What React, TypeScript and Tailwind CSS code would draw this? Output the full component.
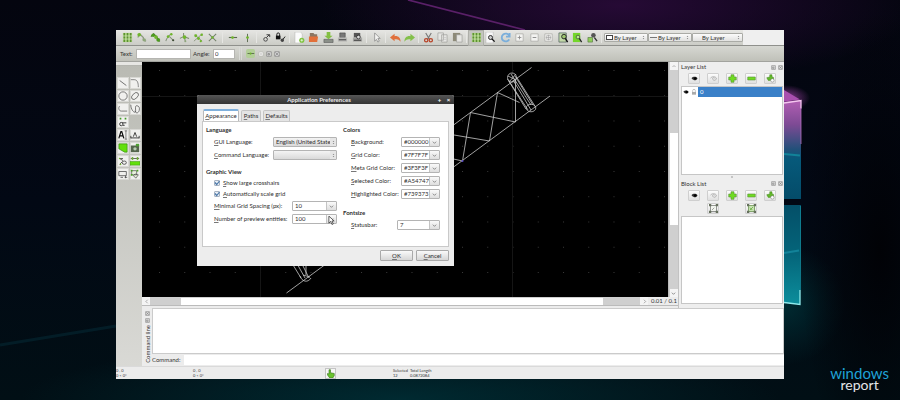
import type { ReactNode } from 'react'

const green = '#6fb52c'
const dark = '#3c4a33'

const icons: Record<string, ReactNode> = {
  grid: (
    <>
      <rect x="1" y="1" width="10" height="10" fill="#a5cf78" />
      <path d="M2.500 1v10M6 1v10M9.500 1v10" stroke="#5d8f34" strokeWidth="1.500" />
      <path d="M1 4.300h10M1 7.700h10" stroke="#dcebcb" strokeWidth=".7" />
    </>
  ),
  snapEnd: (
    <>
      <path d="M2 6 4 2l4 4v3l3 1" stroke="#8a977c" strokeWidth="1.300" fill="none" />
      <circle cx="3.500" cy="3" r="2" fill={green} />
      <circle cx="9" cy="8.500" r="1.800" fill="#8ea77a" />
    </>
  ),
  snapOn: (
    <>
      <path d="M1 5 4 2l4 4v3l3 1" stroke="#4b6b35" strokeWidth="1.200" fill="none" />
      <circle cx="3.500" cy="3.500" r="2" fill="#4c9a1e" />
      <circle cx="6.500" cy="5.500" r="2" fill={green} />
      <circle cx="9" cy="8.500" r="2" fill="#4c9a1e" />
    </>
  ),
  snapCenter: (
    <>
      <path d="M2 10C3 6 5 4 8 2M6 5l4 4" stroke="#84907a" strokeWidth="1.100" fill="none" />
      <circle cx="4.500" cy="5" r="1.500" fill={green} />
      <circle cx="8" cy="2.500" r="1.300" fill={green} />
      <circle cx="10" cy="9" r="1.200" fill={dark} />
    </>
  ),
  snapMid: (
    <>
      <path d="M5 1v4l6 2M5 5 1 7M6 6l1 5" stroke="#7d8a70" strokeWidth="1.100" fill="none" />
      <circle cx="6" cy="5.500" r="2" fill={green} />
      <circle cx="7" cy="10" r="1" fill="#8ea77a" />
    </>
  ),
  snapDist: (
    <>
      <path d="M1 10 10 2M2 3l8 7" stroke="#8b957f" strokeWidth="1" />
      <circle cx="3" cy="4" r="1.600" fill={green} />
      <circle cx="6" cy="7" r="1.600" fill={green} />
      <circle cx="9.500" cy="3" r="1.400" fill={green} />
      <circle cx="8.500" cy="10" r="1.200" fill={green} />
    </>
  ),
  cross: (
    <>
      <path d="m2 2 8 8M10 2 2 10" stroke="#74806a" strokeWidth="1.100" />
      <circle cx="6" cy="6" r="1.300" fill={green} />
    </>
  ),
  horiz: (
    <>
      <path d="M2 6h9" stroke="#59674e" strokeWidth="1.200" />
      <circle cx="6" cy="6" r="1.500" fill={green} />
    </>
  ),
  vert: (
    <>
      <path d="M6 2v9" stroke="#59674e" strokeWidth="1" />
      <circle cx="6" cy="6" r="1.500" fill={green} />
    </>
  ),
  relZero: (
    <>
      <circle cx="5" cy="8" r="2" fill="none" stroke="#444" strokeWidth="1" />
      <path d="M6 6 9 3M6 3h3.500v2.500" stroke="#333" strokeWidth="1" fill="none" />
    </>
  ),
  lockZero: (
    <>
      <rect x="1" y="4" width="5" height="4" fill="#111" />
      <path d="M2 4.500V2.500a1.500 1.500 0 0 1 3 0v2M8 9l3-4" stroke="#111" fill="none" />
      <circle cx="8" cy="9" r="1.800" fill="#444" />
    </>
  ),
  newFile: (
    <>
      <path d="M1 0h6l2 2v10H1z" fill="#fbfbfb" stroke="#b5b5b0" strokeWidth=".6" />
      <circle cx="8.500" cy="9" r="2.800" fill="#7cc23c" />
      <path d="M7 9h3M8.500 7.500v3" stroke="#fff" strokeWidth=".7" />
    </>
  ),
  open: (
    <>
      <path d="M2 1h4l1 1.500h3V6H2z" fill="#8b7764" />
      <path d="M1 5h10l-1 6H1z" fill="#e2703a" />
    </>
  ),
  save: (
    <>
      <path d="M1 8h10v3.500H1z" fill="#8a8f88" stroke="#555" strokeWidth=".6" />
      <path d="M4 0h4v4h2.500L6 8 1.500 4H4z" fill="#83bf43" />
    </>
  ),
  print: (
    <>
      <path d="M3 1h6v5H3z" fill="#777" stroke="#333" strokeWidth=".5" />
      <path d="M1 6h10v4.500H1z" fill="#b8b8b6" />
      <path d="M2 8.500h8" stroke="#333" />
    </>
  ),
  preview: (
    <>
      <path d="M2 1h7v5H2z" fill="#555" />
      <path d="M1 6h10v4.500H1z" fill="#a8a8a6" />
      <path d="M2 9h8" stroke="#333" />
      <circle cx="7" cy="5.500" r="2" fill="#ddd" stroke="#222" strokeWidth=".8" />
    </>
  ),
  pointer: <path d="M4 1v9l2-2 1.500 3L9 10 7.500 7H10z" fill="#f4f4f2" stroke="#777" strokeWidth=".7" />,
  undo: <path d="M0 6 5 2v2.500c4-.5 6.500 2 6.500 6C9.500 8 8 7.500 5 8v2z" fill="#e0703c" />,
  redo: <path d="M12 6 7 2v2.500c-4-.5-6.500 2-6.500 6C2.500 8 4 7.500 7 8v2z" fill="#83c04a" />,
  cut: (
    <>
      <path d="m3 1 4 7M9 1 5 8" stroke="#777" strokeWidth="1.200" />
      <circle cx="3.500" cy="9" r="1.800" fill="none" stroke="#b8452a" strokeWidth="1.400" />
      <circle cx="8.500" cy="9" r="1.800" fill="none" stroke="#b8452a" strokeWidth="1.400" />
    </>
  ),
  copy: (
    <>
      <path d="M1 1h6v8H1zM5 3h6v8H5z" fill="#e6e6e3" stroke="#9a9a96" strokeWidth=".7" />
      <path d="M6 6h4M6 8h4" stroke="#bbb" strokeWidth=".6" />
    </>
  ),
  paste: (
    <>
      <path d="M1 1h8v9H1z" fill="#8d8a78" />
      <path d="M5 3h6v8H5z" fill="#e6e6e3" stroke="#9a9a96" strokeWidth=".7" />
    </>
  ),
  zoomPage: (
    <>
      <path d="M1 0h8v12H1z" fill="#f8f8f8" stroke="#aaa" strokeWidth=".5" />
      <circle cx="6" cy="6" r="2.200" fill="#ccc" stroke="#222" />
      <path d="m7.500 7.500 3 3" stroke="#111" strokeWidth="1.500" />
    </>
  ),
  refresh: <path d="M10 4A4.300 4.300 0 1 0 10 8M10.500 1v4h-4" fill="none" stroke="#7aaedb" strokeWidth="2" />,
  zoomIn: (
    <>
      <path d="M2 2h8v8H2z" fill="#f3f3f1" stroke="#a9a9a5" strokeWidth=".8" />
      <path d="M6 4v4M4 6h4" stroke="#888" strokeWidth=".9" />
    </>
  ),
  zoomOut: (
    <>
      <path d="M2 2h8v8H2z" fill="#f3f3f1" stroke="#a9a9a5" strokeWidth=".8" />
      <path d="M4 6h4" stroke="#888" />
    </>
  ),
  zoomAll: (
    <>
      <path d="M2 2h8v8H2z" fill="#f3f3f1" stroke="#a9a9a5" strokeWidth=".8" />
      <path d="M6 3v6M3 6h6M4 4h4v4H4z" stroke="#999" strokeWidth=".6" fill="none" />
    </>
  ),
  zoomPrev: (
    <>
      <path d="M1 1h8v10H1z" fill="#c2d8a8" stroke="#455" strokeWidth=".7" />
      <circle cx="6.500" cy="5" r="2.500" fill="#9cc56e" stroke="#222" />
      <path d="m8 7 2.500 4" stroke="#111" strokeWidth="1.500" />
    </>
  ),
  zoomWin: (
    <>
      <path d="M1 1h8v10H1z" fill="#74d62a" />
      <circle cx="6.500" cy="5.500" r="2" fill="#b8ec8c" stroke="#444" strokeWidth=".8" />
      <path d="m8 7 2.500 4" stroke="#222" strokeWidth="1.400" />
    </>
  ),
  zoomPan: (
    <>
      <path d="M1 6h5v5H1z" fill="#8fce5a" stroke="#4a6b35" strokeWidth=".6" />
      <circle cx="7" cy="3.500" r="2.500" fill="#555" />
      <path d="m8 6 3 4" stroke="#333" strokeWidth="1.400" />
    </>
  ),
  line: <path d="m2 3 8 6" stroke="#333" strokeWidth=".8" />,
  arc: <path d="M1 2h4c4 0 5 4 5 9" stroke="#555" strokeWidth=".8" fill="none" />,
  circle: <circle cx="6" cy="6" r="5" stroke="#444" strokeWidth=".8" fill="none" />,
  ellipse: <ellipse cx="6" cy="6" rx="5" ry="3" transform="rotate(-45 6 6)" stroke="#444" strokeWidth=".8" fill="none" />,
  polyline: <path d="M2 2.500c-2 2-1 6 2 6h7" stroke="#444" strokeWidth=".8" fill="none" />,
  spline: <path d="M1 1c0 5 3 9 5 9s-1-8 2-8 4 3 3 6-4 4-5 0" stroke="#444" strokeWidth=".8" fill="none" />,
  points: (
    <>
      <path d="M2 1h2v2H2zM8 1h2v2H8z" fill="#3f9a26" />
      <circle cx="4" cy="8.500" r="2" fill="none" stroke="#222" />
      <path d="M5 7h5M6 10h2" stroke="#222" />
    </>
  ),
  text: (
    <>
      <path d="m1 10 2.500-8h1L7 10M2 7h4" stroke="#111" strokeWidth="1.500" fill="none" />
      <path d="M8 1h3M8 11h3M9.500 1v10" stroke="#333" strokeWidth=".7" />
    </>
  ),
  dim: <path d="M1 9.500h10M1 7v3M11 7v3M4 8l2-5 2 5" stroke="#222" strokeWidth="1" fill="none" />,
  hatch: (
    <>
      <path d="M1 1h10v10H8L1 7z" fill="#62df0b" />
      <path d="M1 1h10v10H8L1 7z" fill="none" stroke="#2c7a0c" strokeWidth=".7" />
    </>
  ),
  image: (
    <>
      <path d="M1 3h10v8H1z" fill="#55664d" />
      <path d="M7 1h4v3H7z" fill="#4fa034" />
      <circle cx="6" cy="7" r="2" fill="#b6cdb0" />
    </>
  ),
  modify: (
    <>
      <path d="m2 3 4 2.500M2 3h4M5 8a2.500 2 0 1 0 5 0 2.500 2 0 1 0-5 0M2 10l3-3" stroke="#333" strokeWidth=".9" fill="none" />
      <circle cx="2" cy="3" r="1" fill={green} />
      <circle cx="3" cy="10" r="1" fill={green} />
    </>
  ),
  measure: (
    <>
      <path d="M1 3h10M3 1.500v3M9 1.500v3" stroke="#222" strokeWidth=".8" />
      <path d="M0 6.500h12v4.500H0z" fill="#62df0b" stroke="#3b8a19" strokeWidth=".6" />
      <path d="M2 1.500h2v3H2zM8 1.500h2v3H8z" fill={green} />
    </>
  ),
  block: <path d="M1 3h9v5H1zM3 10h3M8 10h3M9 8v3" stroke="#444" strokeWidth=".9" fill="none" />,
  select: (
    <>
      <path d="M2 2h6v5H2zM6 6l4 1-3 4-3-3z" stroke="#444" strokeWidth=".8" fill="#e8f3dd" />
      <path d="M1 1h2v2H1zM8 1h2v2H8zM1 6h2v2H1z" fill="#49a321" />
    </>
  ),
  eye: (
    <>
      <path d="M2 5.500C4 3 9 3 10 6 8 9.500 5 9 2 5.500z" fill="#333" />
      <circle cx="7" cy="6" r="1.800" fill="#000" />
    </>
  ),
  eyeOff: <path d="M2 5.500C4 3 9 3 10 6M10 6c-1 3-4 3-5 1s2-3 3-1" stroke="#aaa" fill="none" strokeWidth="1.200" />,
  plus: <path d="M4 1h4v3h3v4H8v3H4V8H1V4h3z" fill="#6fdb22" stroke="#5a8f3a" strokeWidth=".8" />,
  minus: <path d="M1 4h10v4H1z" fill="#6fdb22" stroke="#5a8f3a" strokeWidth=".8" />,
  edit: (
    <>
      <path d="M5 1h3v2.500l2 1v4H3L1 5l4-1z" fill="#63b92b" stroke="#3b7a18" strokeWidth=".6" />
      <circle cx="8.500" cy="8.500" r="2.300" fill="#fff" stroke="#777" strokeWidth=".7" />
    </>
  ),
  blockEdit: (
    <>
      <path d="M2 2h8v8H2z" stroke="#555" strokeWidth=".8" fill="#f3f6ef" />
      <path d="M0 0h3v3H0zM9 0h3v3H9zM0 9h3v3H0zM9 9h3v3H9z" fill="#66705d" />
      <path d="m4 8 3-3" stroke="#888" />
    </>
  ),
  blockInsert: (
    <>
      <path d="M2 2h8v8H2z" stroke="#4a7a2c" strokeWidth=".8" fill="#c9e3b4" />
      <path d="M0 0h3v3H0zM9 0h3v3H9zM0 9h3v3H0zM9 9h3v3H9z" fill="#66705d" />
      <path d="m4 8 4-4M4 5l3 3" stroke="#6fb14a" strokeWidth="1.200" />
    </>
  ),
  lock: (
    <>
      <path d="M3 6h6v4H3z" fill="#aaa" />
      <path d="M4 6V4a2 2 0 0 1 4 0v2" fill="none" stroke="#aaa" />
    </>
  ),
  hand: <path d="M4 1h2v4l5 1v3l-2 3H5L2 8V6l2 .5z" fill="#69c32e" stroke="#34701a" strokeWidth=".8" />,
  left: <path d="M8 3 5 6l3 3" stroke="#777" fill="none" />,
  right: <path d="m5 3 3 3-3 3" stroke="#777" fill="none" />,
  up: <path d="m3 8 3-3 3 3" stroke="#777" fill="none" />,
  down: <path d="m2 4 4 4 4-4" stroke="#555" strokeWidth="1.500" fill="none" />,
  updown: <path d="m4 5 2-3 2 3M4 7l2 3 2-3" fill="#888" />,
  float: <path d="M1.500 1.500h9v9h-9zM4 8h3V5H4z" stroke="#777" strokeWidth="1.300" fill="#ddd" />,
  close: <path d="M1.500 1.500h9v9h-9zM3 3l6 6M9 3 3 9" stroke="#777" strokeWidth="1.300" fill="#ddd" />,
}

function Icon({ name, className = 'size-[12px]' }: { name: string; className?: string }) {
  return (
    <svg viewBox="0 0 12 12" className={`block shrink-0 ${className}`} aria-hidden="true">
      {icons[name]}
    </svg>
  )
}

function Tools({ names, className, active }: { names: string[]; className: string; active?: string }) {
  return (
    <div className={`flex shrink-0 items-center justify-between ${className}`}>
      {names.map((name) => (
        <button
          key={name}
          aria-label={name}
          className={`flex h-[14px] w-[14px] items-center justify-center ${name === active ? 'bg-[#c4c5bf] ring-1 ring-[#aeafa9]' : ''}`}
        >
          <Icon name={name} className="size-[11px]" />
        </button>
      ))}
    </div>
  )
}

function Sep() {
  return <div className="ml-[2px] h-[11px] w-[3px] shrink-0 border-l border-[#e6e6e3]" />
}

function LayerSelect({ label, className, children }: { label: string; className: string; children?: ReactNode }) {
  return (
    <div className={`relative shrink-0 ${className}`}>
      <select
        aria-label={label}
        className="block h-[9px] w-full appearance-none rounded-[1px] border border-[#aaaba6] bg-linear-to-b from-[#fbfbfb] to-[#e2e2e0] pl-[9px] text-[6px] leading-[7px] text-[#333]"
      >
        <option>By Layer</option>
      </select>
      <span className="pointer-events-none absolute left-[2px] top-[2px]">{children}</span>
      <span className="pointer-events-none absolute right-[2px] top-[2px]">
        <Icon name="updown" className="size-[5px]" />
      </span>
    </div>
  )
}

// Label with its first letter underlined as the keyboard shortcut
function Mnemonic({ text }: { text: string }) {
  return (
    <>
      <span className="underline decoration-[#777]">{text[0]}</span>
      {text.slice(1)}
    </>
  )
}

function Combo({ id, label, value, className, flat }: { id: string; label: string; value: string; className: string; flat?: boolean }) {
  return (
    <div className="flex h-[10px] items-center justify-between pl-[8px]">
      <label htmlFor={id} className="whitespace-nowrap">
        <Mnemonic text={label} />
      </label>
      <div className={`relative shrink-0 ${className}`}>
        <select
          id={id}
          className={`block h-[10px] w-full appearance-none rounded-[1px] border border-[#b4b4b4] pl-[2px] leading-[8px] ${flat ? 'bg-linear-to-b from-[#f4f4f4] to-[#d9d9d9]' : 'bg-white'}`}
        >
          <option>{value}</option>
        </select>
        <span
          className={`pointer-events-none absolute inset-y-[1px] right-[1px] flex items-center justify-center ${flat ? 'w-[6px] bg-[#e6e6e6]' : 'w-[10px] border-l border-[#c4c4c4] bg-linear-to-b from-[#fafafa] to-[#dedede]'}`}
        >
          <Icon name={flat ? 'updown' : 'down'} className="size-[5px]" />
        </span>
      </div>
    </div>
  )
}

function Check({ id, label }: { id: string; label: string }) {
  return (
    <div className="flex h-[8px] items-center gap-[3px] pl-[8px]">
      <span className="relative block size-[6px]">
        <input
          id={id}
          type="checkbox"
          defaultChecked
          className="block size-[6px] appearance-none rounded-[1px] border border-[#a9b4c2] bg-[#e9eff6]"
        />
        <svg viewBox="0 0 6 6" className="pointer-events-none absolute inset-0 size-[6px]">
          <path d="m1 2.500 1.700 2L5.500 1" stroke="#4a77a8" strokeWidth="1.200" fill="none" />
        </svg>
      </span>
      <label htmlFor={id}>
        <Mnemonic text={label} />
      </label>
    </div>
  )
}

const colors = [
  ['Background:', '#000000'],
  ['Grid Color:', '#7F7F7F'],
  ['Meta Grid Color:', '#3F3F3F'],
  ['Selected Color:', '#A54747'],
  ['Highlighted Color:', '#739373'],
]

const dialogButton =
  'h-[11px] w-[33px] rounded-[1px] border border-[#a9a9a9] bg-linear-to-b from-[#fafafa] to-[#d6d6d6] leading-[9px]'

function Preferences() {
  return (
    <section
      role="dialog"
      aria-labelledby="prefs-title"
      className="absolute left-[55px] top-[33px] w-[257px] rounded-t-[2px] bg-[#ededed] text-[6px] leading-[8px] text-[#2e2e2e]"
    >
      <header className="flex h-[9px] items-center rounded-t-[2px] bg-linear-to-b from-[#565656] to-[#343434] pr-[1px] text-white">
        <h1 id="prefs-title" className="flex-1 pl-[6px] text-center font-bold text-[#e8e8e8]">
          Application Preferences
        </h1>
        <button aria-label="Maximize" className="w-[9px] font-bold">
          +
        </button>
        <button aria-label="Close" className="w-[9px] font-bold">
          ×
        </button>
      </header>

      <div className="px-[5px] pb-[5px] pt-[5px]">
        <div role="tablist" className="flex items-end gap-[2px] pl-[1px]">
          <button role="tab" aria-selected="true" className="h-[12px] w-[36px] rounded-t-[2px] border border-b-0 border-t-2 border-[#b9b9b9] border-t-[#7fb0dc] bg-white">
            <Mnemonic text="Appearance" />
          </button>
          <button role="tab" className="h-[11px] w-[20px] rounded-t-[2px] border border-b-0 border-[#c4c4c4] bg-[#e4e4e4]">
            <Mnemonic text="Paths" />
          </button>
          <button role="tab" className="h-[11px] w-[27px] rounded-t-[2px] border border-b-0 border-[#c4c4c4] bg-[#e4e4e4]">
            <Mnemonic text="Defaults" />
          </button>
        </div>

        <div className="flex h-[126px] justify-between border border-[#c9c9c9] bg-white pl-[3px] pr-[8px] pt-[4px]">
          <div className="flex w-[131px] flex-col gap-[3px]">
            <h2 className="font-bold">Language</h2>
            <Combo id="gui-lang" label="GUI Language:" value="English (United States)" className="w-[64px]" flat />
            <Combo id="cmd-lang" label="Command Language:" value="" className="w-[64px]" flat />
            <h2 className="mt-[5px] font-bold">Graphic View</h2>
            <Check id="crosshairs" label="Show large crosshairs" />
            <Check id="scale-grid" label="Automatically scale grid" />
            <Combo id="spacing" label="Minimal Grid Spacing (px):" value="10" className="w-[45px]" />
            <div className="relative">
              <Combo id="preview" label="Number of preview entities:" value="100" className="w-[45px]" />
              <svg viewBox="0 0 8 10" className="pointer-events-none absolute right-[2px] top-[2px] h-[9px] w-[7px]">
                <path d="M1 0v8l2-2 1.500 3.500L6 9 4.500 5.500H7z" fill="#fff" stroke="#222" strokeWidth=".8" />
              </svg>
            </div>
          </div>

          <div className="flex w-[97px] flex-col gap-[3px]">
            <h2 className="font-bold">Colors</h2>
            {colors.map(([label, value]) => (
              <Combo key={label} id={label} label={label} value={value} className="w-[39px]" />
            ))}
            <h2 className="mt-[7px] font-bold">Fontsize</h2>
            <Combo id="statusbar" label="Statusbar:" value="7" className="w-[43px]" />
          </div>
        </div>

        <div className="mt-[3px] flex justify-end gap-[3px]">
          <button className={dialogButton}>
            <Mnemonic text="OK" />
          </button>
          <button className={dialogButton}>
            <Mnemonic text="Cancel" />
          </button>
        </div>
      </div>
    </section>
  )
}

function Drawing() {
  return (
    <svg viewBox="142 62 526 235" preserveAspectRatio="xMinYMin slice" className="absolute inset-0 size-full" aria-hidden="true">
      <defs>
        <pattern id="dots" x="159" y="70" width="25.250" height="25.250" patternUnits="userSpaceOnUse">
          <path d="M0 .5h1" stroke="#3a3a3a" />
        </pattern>
      </defs>
      <rect x="142" y="62" width="526" height="235" fill="url(#dots)" />
      <path d="M260.500 62v235M512.500 62v235M142 96.500h526" stroke="#151515" />
      <g fill="none" stroke="#c9c9c9" strokeWidth=".8">
        <path d="M440 135 531.500 67.500M440 177 550 96M286.500 293 330 261" />
        <path d="m497.500 92.500-8 48.500-35.500-6M497.500 92.500l22 10M470.500 112.500 515.500 122V80M470.500 112.500l-8 48.500-9-2" />
        <ellipse cx="512" cy="77.500" rx="4.500" ry="4.500" />
        <ellipse cx="531" cy="108" rx="4.800" ry="3.800" />
        <path d="m507.500 79 18.500 30M509 81l19 29M513 80l18 30M515 76l18 29M516.500 77l19 30M511 74l20 31M508 76l8 4M509 82l7-8" />
        <path d="m290 260 11 18M295 260l10 18M300 260l9 18M306 260v15M300 276c2 6 8 7 11 2M303 275l7 2" />
      </g>
      <circle cx="462.500" cy="161" r="1" fill="#5a4ac8" />
    </svg>
  )
}

function DockHeader({ title }: { title: string }) {
  return (
    <div className="flex h-[8px] items-center gap-[2px]">
      <h2 className="flex-1">{title}</h2>
      <button aria-label="Float">
        <Icon name="float" className="size-[5px]" />
      </button>
      <button aria-label="Close">
        <Icon name="close" className="size-[5px]" />
      </button>
    </div>
  )
}

function DockButtons({ names, className = '' }: { names: string[]; className?: string }) {
  return (
    <div className={`mt-[2px] flex justify-between ${className}`}>
      {names.map((name) => (
        <button
          key={name}
          aria-label={name}
          className="flex h-[11px] w-[12px] items-center justify-center rounded-[1px] border border-[#cfcfcf] bg-linear-to-b from-[#fcfcfc] to-[#e0e0e0]"
        >
          <Icon name={name} className="size-[9px]" />
        </button>
      ))}
    </div>
  )
}

const dockTools = ['eye', 'eyeOff', 'plus', 'minus', 'edit']

function Docks() {
  return (
    <aside className="flex w-[106px] shrink-0 flex-col border-l border-[#c2c2c2] bg-[#eeeeee] pb-[4px] pl-[2px] pr-[1px] pt-[1px]">
      <DockHeader title="Layer List" />
      <DockButtons names={dockTools} className="px-[7px]" />
      <div className="mt-[2px] flex-1 border border-[#c6c6c6] bg-white">
        <div className="flex h-[10px] items-center">
          <Icon name="eye" className="size-[8px]" />
          <Icon name="lock" className="size-[8px]" />
          <span className="h-full flex-1 bg-[#3a80c8] pl-[2px] leading-[10px] text-white">0</span>
        </div>
      </div>
      <div className="flex h-[5px] items-center justify-center">
        <span className="h-[2px] w-[2px] bg-[#c4c4c4]" />
      </div>
      <DockHeader title="Block List" />
      <DockButtons names={dockTools} className="px-[7px]" />
      <DockButtons names={['blockEdit', 'blockInsert']} className="px-[26px]" />
      <div className="mt-[2px] flex-1 border border-[#c6c6c6] bg-white" />
    </aside>
  )
}

const scrollButton = 'flex size-[8px] shrink-0 items-center justify-center bg-[#f4f4f4]'

const drawTools = [
  'line', 'arc', 'circle', 'ellipse', 'polyline', 'spline', 'points', '',
  'text', 'dim', 'hatch', 'image', 'modify', 'measure', 'block', 'select',
]

function Wallpaper() {
  return (
    <svg viewBox="0 0 900 400" preserveAspectRatio="none" className="absolute inset-0 size-full" aria-hidden="true">
      <defs>
        <linearGradient id="base" x1="0" y1="0" x2="0" y2="1">
          <stop offset="0" stopColor="#04050f" />
          <stop offset=".5" stopColor="#020814" />
          <stop offset="1" stopColor="#010f15" />
        </linearGradient>
        <radialGradient id="purple">
          <stop offset="0" stopColor="#260a35" />
          <stop offset="1" stopColor="#260a35" stopOpacity="0" />
        </radialGradient>
        <radialGradient id="teal">
          <stop offset="0" stopColor="#002a31" />
          <stop offset="1" stopColor="#002a31" stopOpacity="0" />
        </radialGradient>
        <radialGradient id="pink">
          <stop offset="0" stopColor="#8a3a92" />
          <stop offset="1" stopColor="#8a3a92" stopOpacity="0" />
        </radialGradient>
        <radialGradient id="night">
          <stop offset="0" stopColor="#010206" />
          <stop offset="1" stopColor="#010206" stopOpacity="0" />
        </radialGradient>
        <linearGradient id="paneTop" x1="0" y1="0" x2="0" y2="1">
          <stop offset="0" stopColor="#b35fb4" />
          <stop offset=".25" stopColor="#7d4a94" />
          <stop offset=".5" stopColor="#215079" />
          <stop offset=".6" stopColor="#06597a" />
          <stop offset="1" stopColor="#044c69" />
        </linearGradient>
        <linearGradient id="paneLow" x1="0" y1="0" x2="0" y2="1">
          <stop offset="0" stopColor="#044f68" />
          <stop offset=".5" stopColor="#04657a" />
          <stop offset="1" stopColor="#0c8e9c" />
        </linearGradient>
      </defs>
      <rect width="900" height="400" fill="url(#base)" />
      <ellipse cx="620" cy="5" rx="300" ry="80" fill="url(#purple)" />
      <ellipse cx="400" cy="400" rx="380" ry="60" fill="url(#teal)" />
      <ellipse cx="785" cy="305" rx="60" ry="60" fill="url(#teal)" />
      <ellipse cx="880" cy="250" rx="80" ry="240" fill="url(#night)" />
      <ellipse cx="786" cy="98" rx="24" ry="13" fill="url(#pink)" />
      <path d="M408 0 525 30" stroke="#5a2068" strokeWidth="1.800" />
      <path d="M0 345 116 326" stroke="#052833" strokeWidth="3" opacity=".6" />
      <path d="m784 90 16 9.500-16 2z" fill="#a94fae" />
      <path d="M784 102l17-2v99h-17z" fill="url(#paneTop)" />
      <path d="M784 205h17l-1 99.500-16-2z" fill="url(#paneLow)" />
      <path d="m784 103 17-2.500v8" stroke="#f5c6f0" strokeWidth="1.300" fill="none" />
      <path d="M801 108v36" stroke="#b66fc0" strokeWidth=".8" />
      <path d="m784 154 16 1.500M784 253l15-2.500" stroke="#128399" strokeWidth="2" />
      <path d="m784 302.500 16 2V290" stroke="#8feaec" strokeWidth="1.300" fill="none" />
      <path d="M800.500 206v84" stroke="#138a9c" strokeWidth=".8" />
    </svg>
  )
}

export default function App() {
  return (
    <div className="relative flex min-h-screen flex-col bg-[#02060f] px-[116px] pb-[21px] pt-[30px] font-[Lato,'Open_Sans',sans-serif]">
      <Wallpaper />
      <main className="relative flex flex-1 flex-col bg-[#ececec] text-[6px] leading-[8px] text-[#333]">
        <div className="flex h-[16px] items-center border-b border-[#8f908c] bg-[#efefef]">
          <div className="flex h-full items-center bg-linear-to-b from-[#e6e6e3] to-[#cbccc6] pl-[4px]">
            <Tools className="w-[100px]" names={['grid', 'snapEnd', 'snapOn', 'snapCenter', 'snapMid', 'snapDist', 'cross']} />
            <Sep />
            <Tools className="w-[29px]" names={['horiz', 'vert']} />
            <Sep />
            <Tools className="w-[28px]" names={['relZero', 'lockZero']} />
            <Sep />
            <Tools className="w-[72px]" names={['newFile', 'open', 'save', 'print', 'preview']} />
            <Sep />
            <Tools className="w-[14px]" names={['pointer']} />
            <Sep />
            <Tools className="w-[28px]" names={['undo', 'redo']} />
            <Sep />
            <Tools className="w-[43px]" names={['cut', 'copy', 'paste']} />
            <Sep />
            <Tools
              className="w-[130px]"
              active="grid"
              names={['grid', 'zoomPage', 'refresh', 'zoomIn', 'zoomOut', 'zoomAll', 'zoomPrev', 'zoomWin', 'zoomPan']}
            />
            <Sep />
            <LayerSelect label="Color" className="w-[44px]">
              <span className="block h-[5px] w-[7px] border border-[#444] bg-white" />
            </LayerSelect>
            <LayerSelect label="Line width" className="w-[44px]">
              <span className="mt-[2px] block h-px w-[7px] bg-[#777]" />
            </LayerSelect>
            <LayerSelect label="Line type" className="w-[51px]" />
          </div>
        </div>

        <div className="flex h-[16px] items-center border-b border-[#a2a39e] bg-linear-to-b from-[#d6d7d2] to-[#c0c1b9] pl-[4px]">
          <label htmlFor="snap-text" className="w-[16px]">
            Text:
          </label>
          <input id="snap-text" className="h-[10px] w-[55px] border border-[#b5b5b1] bg-white px-[2px]" />
          <label htmlFor="angle" className="ml-[2px] w-[20px]">
            Angle:
          </label>
          <input id="angle" defaultValue="0" className="h-[10px] w-[22px] border border-[#b5b5b1] bg-white px-[1px]" />
          <div className="ml-[4px] h-[13px] w-[3px] border-x border-[#d9dad6]" />
          <button aria-label="Restrict" className="ml-[4px] flex size-[9px] items-center justify-center rounded-[2px] bg-[#b3cf98]">
            <Icon name="horiz" className="size-[9px]" />
          </button>
          <div className="ml-[3px] flex gap-[2px]">
            <Icon name="zoomOut" className="size-[6px]" />
            <Icon name="float" className="size-[6px]" />
            <Icon name="close" className="size-[6px]" />
          </div>
        </div>

        <div className="flex flex-1">
          <nav className="w-[26px] shrink-0 bg-linear-to-b from-[#b9bab3] to-[#d9d9d5]">
            <div className="h-[4px] border-b border-[#b4b5af] bg-[#e6e6e3]" />
            <div className="mt-[11px] grid grid-cols-2 gap-px px-px">
              {drawTools.map((name) =>
                name ? (
                  <button
                    key={name}
                    aria-label={name}
                    className="flex h-[12px] items-center justify-center border border-[#d8d8d4] bg-[#f0f0ee]"
                  >
                    <Icon name={name} className="size-[10px]" />
                  </button>
                ) : (
                  <span key="blank" />
                ),
              )}
            </div>
          </nav>

          <div className="flex min-w-0 flex-1 flex-col">
            <div className="flex flex-1">
              <div className="flex min-w-0 flex-1 flex-col">
                <div className="flex flex-1">
                  <div className="relative min-w-0 flex-1 bg-black">
                    <Drawing />
                    <Preferences />
                  </div>
                  <div className="flex w-[10px] flex-col items-center border-l border-[#bbb] bg-[#cfcfcf]">
                    <span className={scrollButton}>
                      <Icon name="up" className="size-[6px]" />
                    </span>
                    <span className="h-[63px]" />
                    <span className="h-[92px] w-[8px] bg-white" />
                    <span className="flex-1" />
                    <span className={scrollButton}>
                      <Icon name="down" className="size-[5px]" />
                    </span>
                  </div>
                </div>
                <div className="flex h-[9px] items-center border-b border-[#bbb] bg-[#cfcfcf]">
                  <span className={scrollButton}>
                    <Icon name="left" className="size-[7px]" />
                  </span>
                  <span className="w-[31px]" />
                  <span className="h-[7px] min-w-0 flex-1 bg-white" />
                  <span className="w-[37px]" />
                  <span className={scrollButton}>
                    <Icon name="right" className="size-[7px]" />
                  </span>
                  <span className="h-[8px] w-[30px] whitespace-nowrap bg-[#ececec] pr-px text-right">0.01 / 0.1</span>
                </div>
                <div className="h-[2px] shrink-0" />
              </div>
              <Docks />
            </div>

            <section className="flex h-[58px] shrink-0">
              <div className="flex w-[10px] flex-col items-center gap-[2px] pt-[3px]">
                <Icon name="close" className="size-[5px]" />
                <Icon name="float" className="size-[5px]" />
                <h2 className="rotate-180 whitespace-nowrap leading-[9px] [writing-mode:vertical-rl]">Command line</h2>
              </div>
              <div className="flex min-w-0 flex-1 flex-col">
                <textarea
                  aria-label="Command history"
                  readOnly
                  className="block min-h-0 flex-1 resize-none border border-[#cbcbcb] bg-white"
                />
                <div className="my-px flex h-[10px] items-center">
                  <label htmlFor="command" className="w-[32px]">
                    Command:
                  </label>
                  <input id="command" className="h-[10px] min-w-0 flex-1 bg-white px-[2px]" />
                </div>
              </div>
            </section>
          </div>
        </div>

        <footer className="flex h-[13px] items-center border-t border-[#dadada] bg-[#ececec] text-[4px] leading-[5px]">
          <p className="w-[77px]">
            0 , 0
            <br />0 &lt; 0°
          </p>
          <p className="w-[132px]">
            0 , 0
            <br />0 &lt; 0°
          </p>
          <button aria-label="Grab" className="flex size-[11px] items-center justify-center border border-[#c4c4c4] bg-[#f6f6f6]">
            <Icon name="hand" className="size-[9px]" />
          </button>
          <p className="ml-[57px] w-[17px]">
            Selected
            <br />
            12
          </p>
          <p>
            Total Length
            <br />
            0.0872084
          </p>
        </footer>
      </main>

      <div className="absolute bottom-[9px] right-[11px] text-center text-[15px] leading-[12px]">
        <p className="text-[#1fa2d6]">windows</p>
        <p className="text-[14px] text-[#e4e6e8]">report</p>
      </div>
    </div>
  )
}
